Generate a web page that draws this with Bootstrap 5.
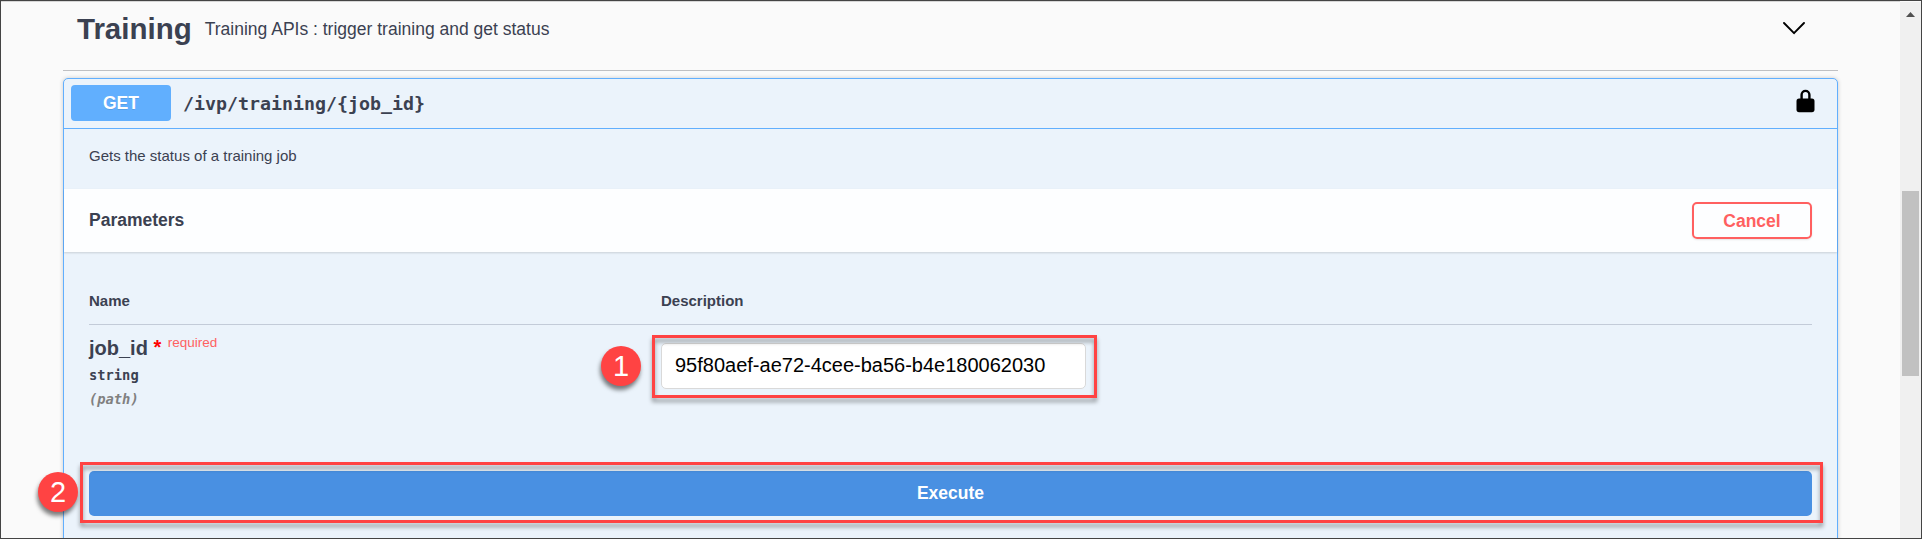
<!DOCTYPE html>
<html lang="en">
<head>
<meta charset="utf-8">
<title>Training API</title>
<link href="https://cdn.jsdelivr.net/npm/bootstrap@5.3.0/dist/css/bootstrap.min.css" rel="stylesheet">
<style>
body{font-family:"Liberation Sans",Arial,sans-serif;color:#3b4151;background:#fafafa;font-size:17.5px;line-height:20px}
.frame{height:539px;border:1px solid #444;overflow:hidden}
.frame-main{padding:0 62px;box-shadow:inset 0 1px 0 #d6d6d6}
.tag-head{height:70px;padding:0 33px 13px 14px;border-bottom:1px solid #bfc0c3;margin-bottom:7px}
.tag-head h3{font-size:29.5px;line-height:34px}
.tag-text{margin-left:13px}
.tag-head svg{margin-bottom:2px}
.mono{font-family:"DejaVu Sans Mono","Liberation Mono",monospace;font-weight:700}
.opblock{border:1px solid #61affe;border-radius:5px;background:#ebf3fb;box-shadow:0 0 4px rgba(0,0,0,.19);height:480px}
.op-summary{height:50px;border-bottom:1px solid #61affe;padding:0 22px 0 7px}
.op-method{width:100px;height:36px;margin-bottom:1px;background:#61affe;border-radius:4px;text-shadow:0 1px 0 rgba(0,0,0,.1)}
.op-path{font-size:18.27px;margin-left:12px}
.op-lock{margin-bottom:6px}
.op-desc{height:60px;padding:0 25px 6px;font-size:15px}
.params-head{height:63px;background:rgba(255,255,255,.87);box-shadow:0 1px 2px rgba(0,0,0,.15);padding:0 25px}
.params-title{margin-bottom:2px}
.btn-cancel{width:120px;height:37px;padding:0;border:2px solid #ff6060;border-radius:5px;color:#ff6060;font-weight:700;font-size:17.5px;line-height:20px;box-shadow:0 1px 2px rgba(0,0,0,.1)}
.params-body{padding:25px 25px 0}
.name-col{width:572px}
.col-heads{height:48px;border-bottom:1px solid #c3cbd8;font-size:15px;font-weight:700}
.param-row{height:146px}
.param-name{font-size:20px;line-height:22px;font-weight:700;margin-top:12px}
.star{color:#f00;font-size:20px;margin-left:5.5px;line-height:20px}
.req{color:#ff6161;font-size:13.5px;font-weight:400;line-height:11px;margin-left:6.5px}
.param-type{font-size:13.75px;line-height:20px;margin-top:6px}
.param-in{font-size:13.75px;line-height:20px;margin-top:4px;color:#808080}
.id-input{width:425px;height:46px;margin-top:18px;padding:0 13px 2px;border:1px solid #d9d9d9;border-radius:5px;color:#000;font-size:20px;background:#fff}
.id-input:focus{box-shadow:none}
.btn-execute{height:45px;background:#4990e2;color:#fff;border:0;border-radius:5px;font-weight:700;font-size:17.5px;line-height:20px;padding:0 0 2px}
.mark-box{position:absolute;border:3px solid #ff4343;filter:drop-shadow(0 4px 2px rgba(0,0,0,.38));pointer-events:none}
.box-input{left:-9px;top:10px;width:445px;height:63px}
.box-exec{left:-9px;right:-11px;top:-9px;height:61px}
.mark-dot{position:absolute;width:40px;height:40px;border-radius:50%;background:#ff4343;color:#fff;font-size:29px;line-height:40px;text-align:center;box-shadow:-1px 4px 4px rgba(0,0,0,.5)}
.dot-one{left:-60px;top:21px}
.dot-two{left:-51px;top:1px}
.scroll-track{width:21px;background:#f0f0f0;padding:10px 0 0 2px;margin-top:1px}
.scroll-track svg{margin-left:4px}
.scroll-thumb{width:17px;height:185px;background:#c1c1c1;margin-top:174px}
</style>
</head>
<body>
<div class="frame d-flex">
  <main class="frame-main flex-grow-1">
    <header class="tag-head d-flex align-items-center">
      <h3 class="fw-bold mb-0">Training</h3>
      <span class="flex-grow-1 tag-text">Training APIs : trigger training and get status</span>
      <svg width="22" height="13" viewBox="0 0 22 13" fill="none" stroke="#000" stroke-width="1.9" stroke-linecap="round" stroke-linejoin="round"><path d="M1 1l10 10.2L21 1"/></svg>
    </header>
    <section class="opblock">
      <div class="op-summary d-flex align-items-center">
        <div class="op-method text-white fw-bold d-flex align-items-center justify-content-center">GET</div>
        <div class="op-path mono flex-grow-1">/ivp/training/{job_id}</div>
        <svg class="op-lock" width="19" height="24" viewBox="0 0 19 24"><path d="M5.6 10V5.8a3.9 3.9 0 0 1 7.8 0V10" fill="none" stroke="#000" stroke-width="2.4"/><rect x=".5" y="9.5" width="18" height="13.7" rx="2.6"/></svg>
      </div>
      <div class="op-desc d-flex align-items-center">Gets the status of a training job</div>
      <div class="params-head d-flex align-items-center justify-content-between">
        <span class="params-title fw-bold">Parameters</span>
        <button class="btn btn-cancel" type="button">Cancel</button>
      </div>
      <div class="params-body">
        <div class="col-heads d-flex align-items-center"><div class="name-col">Name</div><div>Description</div></div>
        <div class="param-row d-flex">
          <div class="name-col">
            <div class="param-name d-flex">job_id<span class="star">*</span><span class="req">required</span></div>
            <div class="param-type mono">string</div>
            <div class="param-in mono fst-italic">(path)</div>
          </div>
          <div class="position-relative">
            <input class="form-control id-input" type="text" value="95f80aef-ae72-4cee-ba56-b4e180062030" aria-label="job_id">
            <div class="mark-box box-input"></div>
            <div class="mark-dot dot-one">1</div>
          </div>
        </div>
        <div class="position-relative">
          <button class="btn btn-execute w-100 d-block" type="button">Execute</button>
          <div class="mark-box box-exec"></div>
          <div class="mark-dot dot-two">2</div>
        </div>
      </div>
    </section>
  </main>
  <div class="scroll-track flex-shrink-0">
    <svg class="d-block" width="9" height="5" viewBox="0 0 9 5"><path d="M0 5L4.5 0 9 5z" fill="#505050"/></svg>
    <div class="scroll-thumb"></div>
  </div>
</div>
<script src="https://cdn.jsdelivr.net/npm/bootstrap@5.3.0/dist/js/bootstrap.bundle.min.js"></script>
</body>
</html>
